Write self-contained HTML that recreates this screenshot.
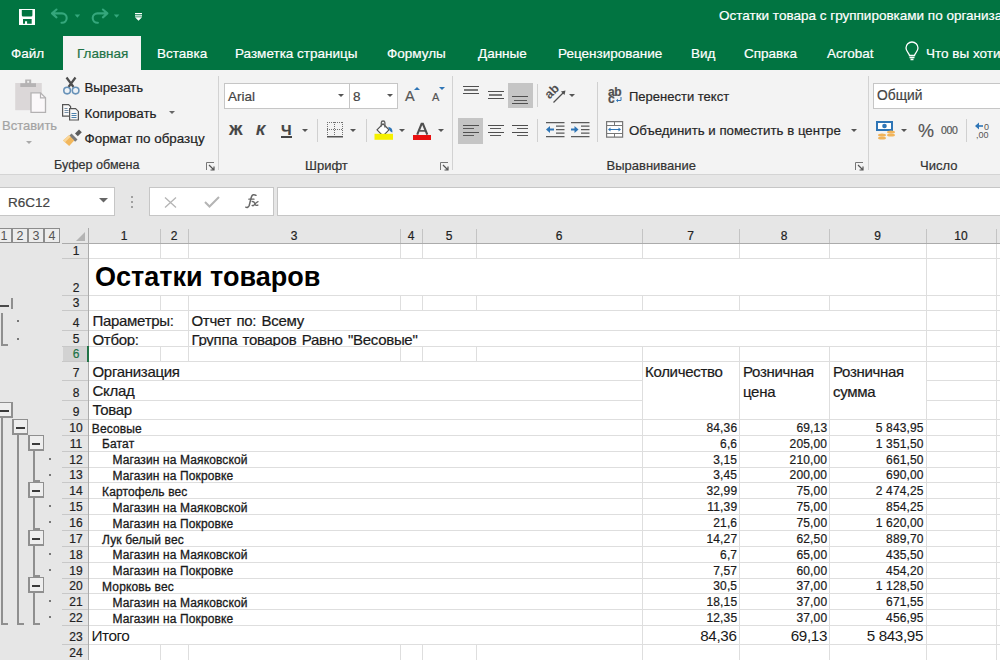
<!DOCTYPE html>
<html><head><meta charset="utf-8"><style>
html,body{margin:0;padding:0;}
body{width:1000px;height:660px;overflow:hidden;position:relative;background:#fff;font-family:"Liberation Sans",sans-serif;}
.a{position:absolute;}
.t{white-space:nowrap;}
.s{-webkit-text-stroke:0.2px currentColor;}
svg{overflow:visible;}
</style></head><body>
<div class="a" style="left:0px;top:0px;width:1000px;height:70px;background:#017441;"></div>
<svg class="a" style="left:19px;top:9px" width="16" height="16" viewBox="0 0 16 16"><path fill="#fff" d="M0 0h16v16H0z"/><path fill="#017441" d="M2.8 1h10.6v5.2a1.3 1.3 0 0 1-1.3 1.3H4.1a1.3 1.3 0 0 1-1.3-1.3zM4 10h8.7v4.8H8.1v-2.5H6v2.5H4z"/></svg>
<svg class="a" style="left:45px;top:3px" width="80" height="27" viewBox="0 0 80 27"><g fill="none" stroke="#35a77c" stroke-width="2.1" stroke-linecap="round" stroke-linejoin="round"><path d="M11.5 6.5L7 10.4l4.5 4M7 10.4h10a4.7 4.7 0 0 1 0 9.4h-.5"/><path d="M57.9 6.5l4.5 3.9-4.5 4M62.4 10.4h-10a4.7 4.7 0 0 0 0 9.4h.5"/></g><path fill="#35a77c" d="M29.6 11.6h5.6l-2.8 3.2zM68.8 11.6h5.6l-2.8 3.2z"/></svg>
<svg class="a" style="left:135px;top:13px" width="7" height="8" viewBox="0 0 7 8"><path fill="#fff" d="M0 0h7v1.3H0zM0 2.3h7v1.3H0zM0 4.3h7l-3.5 3.5z"/></svg>
<div class="a t s" style="left:719px;top:9.07px;font-size:13.5px;line-height:13.5px;color:#ffffff;">Остатки товара с группировками по организациям</div>
<div class="a" style="left:63px;top:36px;width:78px;height:34px;background:#f3f3f3;"></div>
<div class="a t s" style="left:11px;top:46.57px;font-size:13.5px;line-height:13.5px;color:#ffffff;">Файл</div>
<div class="a t s" style="left:77px;top:46.57px;font-size:13.5px;line-height:13.5px;color:#217346;">Главная</div>
<div class="a t s" style="left:157px;top:46.57px;font-size:13.5px;line-height:13.5px;color:#ffffff;">Вставка</div>
<div class="a t s" style="left:235px;top:46.57px;font-size:13.5px;line-height:13.5px;color:#ffffff;">Разметка страницы</div>
<div class="a t s" style="left:387px;top:46.57px;font-size:13.5px;line-height:13.5px;color:#ffffff;">Формулы</div>
<div class="a t s" style="left:478px;top:46.57px;font-size:13.5px;line-height:13.5px;color:#ffffff;">Данные</div>
<div class="a t s" style="left:558px;top:46.57px;font-size:13.5px;line-height:13.5px;color:#ffffff;">Рецензирование</div>
<div class="a t s" style="left:691px;top:46.57px;font-size:13.5px;line-height:13.5px;color:#ffffff;">Вид</div>
<div class="a t s" style="left:744px;top:46.57px;font-size:13.5px;line-height:13.5px;color:#ffffff;">Справка</div>
<div class="a t s" style="left:827px;top:46.57px;font-size:13.5px;line-height:13.5px;color:#ffffff;">Acrobat</div>
<div class="a t s" style="left:926px;top:46.57px;font-size:13.5px;line-height:13.5px;color:#ffffff;">Что вы хотите сделать?</div>
<svg class="a" style="left:905px;top:42px" width="14" height="20" viewBox="0 0 14 20"><path fill="none" stroke="#fff" stroke-width="1.3" d="M4.5 13.5c0-2-3.5-4-3.5-7.5a6 6 0 0 1 12 0c0 3.5-3.5 5.5-3.5 7.5z"/><path fill="none" stroke="#fff" stroke-width="1.3" d="M4.5 15.5h5M5.5 17.5h3"/></svg>
<div class="a" style="left:0px;top:70px;width:1000px;height:104px;background:#f3f3f3;"></div>
<div class="a" style="left:0px;top:174px;width:1000px;height:1px;background:#d4d4d4;"></div>
<div class="a" style="left:0px;top:175px;width:1000px;height:53px;background:#e6e6e6;"></div>
<div class="a" style="left:218px;top:76px;width:1px;height:94px;background:#d2d2d2;"></div>
<div class="a" style="left:452px;top:76px;width:1px;height:94px;background:#d2d2d2;"></div>
<div class="a" style="left:868px;top:76px;width:1px;height:94px;background:#d2d2d2;"></div>
<svg class="a" style="left:14px;top:79px" width="34" height="35" viewBox="0 0 34 35"><path fill="#dbd7d8" d="M1.2 4h26.6v27.2H1.2z"/><path fill="#b5b3b4" d="M6.3 4.3h15.7v3.6H6.3zM11.2 0.5h6v4h-6z"/><path fill="#f0f0f0" d="M13.2 1.8h2v2h-2z"/><path fill="#fbf8fa" stroke="#b3b1b2" stroke-width="1.3" d="M17 13.8h9.5l5 5v14.5H17z"/><path fill="none" stroke="#b3b1b2" stroke-width="1.2" d="M26.5 13.8v5h5"/></svg>
<div class="a t s" style="left:2px;top:119.00px;font-size:13px;line-height:13px;color:#a3a3a3;">Вставить</div>
<svg class="a" style="left:26px;top:141px" width="6" height="4" viewBox="0 0 6 4"><path fill="#a9a9a9" d="M0 0h6l-3 3z"/></svg>
<svg class="a" style="left:62px;top:76px" width="18" height="19" viewBox="0 0 18 19"><path fill="none" stroke="#4d4d4d" stroke-width="2.2" d="M4.5 1.5l7 9.5M13.5 1.5l-7 9.5"/><circle cx="5.1" cy="14.6" r="3.3" fill="#eef2f6" stroke="#6892b8" stroke-width="1.6"/><circle cx="13.6" cy="14.6" r="3.3" fill="#eef2f6" stroke="#6892b8" stroke-width="1.6"/></svg>
<div class="a t s" style="left:84.5px;top:80.83px;font-size:13.2px;line-height:13.2px;color:#222;">Вырезать</div>
<svg class="a" style="left:62px;top:104px" width="18" height="17" viewBox="0 0 18 17"><path fill="#f8f8f8" stroke="#555" stroke-width="1.2" d="M0.6 0.6h6l2 2v9.5H0.6z"/><path fill="none" stroke="#7891a8" stroke-width="1" d="M2.5 4.5h3M2.5 6.5h4M2.5 8.5h4"/><path fill="#f8f8f8" stroke="#555" stroke-width="1.2" d="M7.6 4.6h6l2.8 2.8v8.6H7.6z"/><path fill="none" stroke="#4d82ad" stroke-width="1" d="M9.5 9.5h5M9.5 11.5h5M9.5 13.5h5"/></svg>
<div class="a t s" style="left:84.5px;top:106.66px;font-size:13.4px;line-height:13.4px;color:#222;">Копировать</div>
<svg class="a" style="left:169px;top:111px" width="6" height="4" viewBox="0 0 6 4"><path fill="#666" d="M0 0h6l-3 3z"/></svg>
<svg class="a" style="left:62px;top:129px" width="20" height="17" viewBox="0 0 20 17"><path fill="#5a5a5a" d="M13 4.5l4-4 2.8 2.8-4 4z"/><path fill="#7a7a7a" d="M9.5 4.5l6 6-2.3 2.3-6-6z"/><path fill="#f2b75c" d="M1 11.5l6-5.2 5.2 5.2-5 5.5z"/><path fill="#f8d69a" d="M1 11.5l6-5.2 1.5 1.5-5.5 5.5z"/></svg>
<div class="a t s" style="left:84.5px;top:131.66px;font-size:13.4px;line-height:13.4px;color:#222;">Формат по образцу</div>
<div class="a t s" style="left:54px;top:159.33px;font-size:12.6px;line-height:12.6px;color:#333;">Буфер обмена</div>
<svg class="a" style="left:206px;top:162px" width="9" height="9" viewBox="0 0 9 9"><path fill="none" stroke="#777" stroke-width="1" d="M0.5 8V0.5H8"/><path fill="none" stroke="#555" stroke-width="1.2" d="M3 3l5 5M4.5 8H8V4.5"/></svg>
<div class="a" style="left:224px;top:83px;width:126px;height:26px;background:#c6c6c6;"></div>
<div class="a" style="left:225px;top:84px;width:124px;height:24px;background:#fff;"></div>
<div class="a" style="left:349px;top:83px;width:49px;height:26px;background:#c6c6c6;"></div>
<div class="a" style="left:350px;top:84px;width:47px;height:24px;background:#fff;"></div>
<div class="a t s" style="left:228px;top:89.57px;font-size:13.5px;line-height:13.5px;color:#444;">Arial</div>
<div class="a t s" style="left:353px;top:89.57px;font-size:13.5px;line-height:13.5px;color:#444;">8</div>
<svg class="a" style="left:338px;top:94px" width="6" height="4" viewBox="0 0 6 4"><path fill="#555" d="M0 0h6l-3 3z"/></svg>
<svg class="a" style="left:387px;top:94px" width="6" height="4" viewBox="0 0 6 4"><path fill="#555" d="M0 0h6l-3 3z"/></svg>
<div class="a t s" style="left:405px;top:89.33px;font-size:14.5px;line-height:14.5px;color:#555;">A</div>
<svg class="a" style="left:414px;top:87px" width="6" height="3" viewBox="0 0 6 3"><path fill="#2e75b6" d="M0 3h6l-3-3z"/></svg>
<div class="a t s" style="left:432px;top:92.29px;font-size:11px;line-height:11px;color:#555;">A</div>
<svg class="a" style="left:439px;top:87px" width="6" height="3" viewBox="0 0 6 3"><path fill="#2e75b6" d="M0 0h6l-3 3z"/></svg>
<div class="a t s" style="left:229px;top:122.30px;font-size:15px;line-height:15px;color:#444;font-weight:bold;">Ж</div>
<div class="a t s" style="left:256px;top:122.30px;font-size:15px;line-height:15px;color:#444;font-weight:bold;font-style:italic;">К</div>
<div class="a t s" style="left:281px;top:122.30px;font-size:15px;line-height:15px;color:#444;font-weight:bold;">Ч</div>
<div class="a" style="left:281px;top:136px;width:11px;height:1.5px;background:#444;"></div>
<svg class="a" style="left:302px;top:129px" width="6" height="4" viewBox="0 0 6 4"><path fill="#555" d="M0 0h6l-3 3z"/></svg>
<div class="a" style="left:317px;top:119px;width:1px;height:23px;background:#d0d0d0;"></div>
<svg class="a" style="left:327px;top:122px" width="16" height="16" viewBox="0 0 16 16"><g fill="#707070"><rect x="0" y="0" width="1" height="1"/><rect x="0" y="7" width="1" height="1"/><rect x="2" y="0" width="1" height="1"/><rect x="2" y="7" width="1" height="1"/><rect x="4" y="0" width="1" height="1"/><rect x="4" y="7" width="1" height="1"/><rect x="6" y="0" width="1" height="1"/><rect x="6" y="7" width="1" height="1"/><rect x="8" y="0" width="1" height="1"/><rect x="8" y="7" width="1" height="1"/><rect x="10" y="0" width="1" height="1"/><rect x="10" y="7" width="1" height="1"/><rect x="12" y="0" width="1" height="1"/><rect x="12" y="7" width="1" height="1"/><rect x="14" y="0" width="1" height="1"/><rect x="14" y="7" width="1" height="1"/><rect x="0" y="0" width="1" height="1"/><rect x="7" y="0" width="1" height="1"/><rect x="15" y="0" width="1" height="1"/><rect x="0" y="2" width="1" height="1"/><rect x="7" y="2" width="1" height="1"/><rect x="15" y="2" width="1" height="1"/><rect x="0" y="4" width="1" height="1"/><rect x="7" y="4" width="1" height="1"/><rect x="15" y="4" width="1" height="1"/><rect x="0" y="6" width="1" height="1"/><rect x="7" y="6" width="1" height="1"/><rect x="15" y="6" width="1" height="1"/><rect x="0" y="8" width="1" height="1"/><rect x="7" y="8" width="1" height="1"/><rect x="15" y="8" width="1" height="1"/><rect x="0" y="10" width="1" height="1"/><rect x="7" y="10" width="1" height="1"/><rect x="15" y="10" width="1" height="1"/><rect x="0" y="12" width="1" height="1"/><rect x="7" y="12" width="1" height="1"/><rect x="15" y="12" width="1" height="1"/></g><path fill="#555" d="M0 14h16v1.5H0z"/></svg>
<svg class="a" style="left:350px;top:129px" width="6" height="4" viewBox="0 0 6 4"><path fill="#555" d="M0 0h6l-3 3z"/></svg>
<div class="a" style="left:366px;top:119px;width:1px;height:23px;background:#d0d0d0;"></div>
<svg class="a" style="left:375px;top:120px" width="19" height="20" viewBox="0 0 19 20"><path fill="#fff" stroke="#505050" stroke-width="1.2" d="M2 9.8L8 3.8l6 6-6 6z"/><path fill="none" stroke="#606060" stroke-width="1.3" d="M6.3 6.5V2.8a1.8 1.8 0 0 1 3.6 0V7.5"/><path fill="#2e75b6" d="M13.2 6.8c3 .4 4.6 2.6 4.2 5.8-1.6-.5-3.2-2-4.2-5.8z"/><path fill="#f5f000" d="M-0.5 13.8h18.5v6H-0.5z"/></svg>
<svg class="a" style="left:399px;top:129px" width="6" height="4" viewBox="0 0 6 4"><path fill="#555" d="M0 0h6l-3 3z"/></svg>
<svg class="a" style="left:416px;top:123px" width="13" height="12" viewBox="0 0 13 12"><path fill="none" stroke="#4f4f4f" stroke-width="2.1" d="M1.2 11.6L5.6 0.9h1.3l4.4 10.7"/><path fill="none" stroke="#4f4f4f" stroke-width="1.6" d="M3.4 7.9h5.6"/></svg>
<div class="a" style="left:413px;top:135px;width:18px;height:4.5px;background:#e81010;"></div>
<svg class="a" style="left:438px;top:129px" width="6" height="4" viewBox="0 0 6 4"><path fill="#555" d="M0 0h6l-3 3z"/></svg>
<div class="a t s" style="left:305px;top:159.00px;font-size:13px;line-height:13px;color:#333;">Шрифт</div>
<svg class="a" style="left:440px;top:162px" width="9" height="9" viewBox="0 0 9 9"><path fill="none" stroke="#777" stroke-width="1" d="M0.5 8V0.5H8"/><path fill="none" stroke="#555" stroke-width="1.2" d="M3 3l5 5M4.5 8H8V4.5"/></svg>
<div class="a" style="left:508px;top:83px;width:25px;height:25px;background:#c5c5c5;"></div>
<div class="a" style="left:463px;top:86px;width:16px;height:1px;background:#4f4f4f;"></div>
<div class="a" style="left:464px;top:89px;width:14px;height:2px;background:#7a7a7a;"></div>
<div class="a" style="left:463px;top:93px;width:16px;height:1px;background:#4f4f4f;"></div>
<div class="a" style="left:488px;top:91px;width:16px;height:1px;background:#4f4f4f;"></div>
<div class="a" style="left:489px;top:94px;width:13px;height:1.5px;background:#7a7a7a;"></div>
<div class="a" style="left:488px;top:98px;width:16px;height:1px;background:#4f4f4f;"></div>
<div class="a" style="left:512px;top:96px;width:16px;height:1px;background:#4f4f4f;"></div>
<div class="a" style="left:514px;top:100px;width:13px;height:1px;background:#5a5a5a;"></div>
<div class="a" style="left:512px;top:103px;width:16px;height:1px;background:#4f4f4f;"></div>
<div class="a" style="left:537px;top:84px;width:1px;height:23px;background:#d0d0d0;"></div>
<svg class="a" style="left:545px;top:84px" width="22" height="20" viewBox="0 0 22 20"><text x="0" y="0" transform="translate(4.5 15.5) rotate(-45)" font-family="Liberation Sans" font-size="12.5" font-weight="bold" fill="#505050">ab</text><path fill="none" stroke="#505050" stroke-width="1.3" d="M8.5 18.5L18.5 8.5"/><path fill="#505050" d="M20.5 6.5l-4.6 1 3.6 3.6z"/></svg>
<svg class="a" style="left:569px;top:94px" width="6" height="4" viewBox="0 0 6 4"><path fill="#555" d="M0 0h6l-3 3z"/></svg>
<div class="a" style="left:458px;top:118px;width:25px;height:26px;background:#c5c5c5;"></div>
<div class="a" style="left:463px;top:125px;width:16px;height:1px;background:#4f4f4f;"></div>
<div class="a" style="left:463px;top:128px;width:11px;height:1px;background:#5a5a5a;"></div>
<div class="a" style="left:463px;top:131.5px;width:16px;height:1.5px;background:#4f4f4f;"></div>
<div class="a" style="left:463px;top:135px;width:11px;height:1px;background:#5a5a5a;"></div>
<div class="a" style="left:488px;top:125px;width:16px;height:1px;background:#4f4f4f;"></div>
<div class="a" style="left:490px;top:128px;width:11px;height:1px;background:#5a5a5a;"></div>
<div class="a" style="left:488px;top:131.5px;width:16px;height:1.5px;background:#4f4f4f;"></div>
<div class="a" style="left:490px;top:135px;width:11px;height:1px;background:#5a5a5a;"></div>
<div class="a" style="left:512px;top:125px;width:16px;height:1px;background:#4f4f4f;"></div>
<div class="a" style="left:517px;top:128px;width:11px;height:1px;background:#5a5a5a;"></div>
<div class="a" style="left:512px;top:131.5px;width:16px;height:1.5px;background:#4f4f4f;"></div>
<div class="a" style="left:517px;top:135px;width:11px;height:1px;background:#5a5a5a;"></div>
<div class="a" style="left:537px;top:119px;width:1px;height:23px;background:#d0d0d0;"></div>
<svg class="a" style="left:546px;top:122px" width="19" height="15" viewBox="0 0 19 15"><path fill="none" stroke="#5a5a5a" stroke-width="1.2" d="M0 0.6h18.5M10 4.1h8.5M10 7.6h8.5M10 11.1h8.5M0 14.6h18.5"/><path fill="none" stroke="#2e75b6" stroke-width="2" d="M3 7.5h5"/><path fill="#2e75b6" d="M0 7.5l4-3.6v7.2z"/></svg>
<svg class="a" style="left:571px;top:122px" width="19" height="15" viewBox="0 0 19 15"><path fill="none" stroke="#5a5a5a" stroke-width="1.2" d="M0 0.6h18.5M10 4.1h8.5M10 7.6h8.5M10 11.1h8.5M0 14.6h18.5"/><path fill="none" stroke="#2e75b6" stroke-width="2" d="M0 7.5h5"/><path fill="#2e75b6" d="M7.5 7.5l-4-3.6v7.2z"/></svg>
<div class="a" style="left:597px;top:82px;width:1px;height:60px;background:#d0d0d0;"></div>
<div class="a t s" style="left:608px;top:86.34px;font-size:12px;line-height:12px;color:#505050;font-weight:bold;letter-spacing:-0.5px;">ab</div>
<div class="a t s" style="left:608px;top:92.84px;font-size:12px;line-height:12px;color:#505050;font-weight:bold;">c</div>
<svg class="a" style="left:616px;top:97px" width="6" height="6" viewBox="0 0 6 6"><path fill="none" stroke="#2e75b6" stroke-width="1" d="M5 0v3.5H1.5"/><path fill="#2e75b6" d="M0 3.5l2-1.8v3.6z"/></svg>
<div class="a t s" style="left:629px;top:90.00px;font-size:13px;line-height:13px;color:#262626;">Перенести текст</div>
<svg class="a" style="left:606px;top:121px" width="18" height="17" viewBox="0 0 18 17"><path fill="#fff" stroke="#777" stroke-width="1.2" d="M0.6 0.6h16v15.5H0.6z"/><path fill="none" stroke="#777" stroke-width="1" d="M0.6 4.5h16M0.6 12.5h16M8.5 0.6v4M8.5 12.5v3.6"/><path fill="none" stroke="#2e75b6" stroke-width="1" d="M3 8.5h11"/><path fill="#2e75b6" d="M2 8.5l2.5-2v4zM15 8.5l-2.5-2v4z"/></svg>
<div class="a t s" style="left:629px;top:123.78px;font-size:13.25px;line-height:13.25px;color:#262626;">Объединить и поместить в центре</div>
<svg class="a" style="left:851px;top:129px" width="6" height="4" viewBox="0 0 6 4"><path fill="#555" d="M0 0h6l-3 3z"/></svg>
<div class="a t s" style="left:606.5px;top:159.00px;font-size:13px;line-height:13px;color:#333;">Выравнивание</div>
<svg class="a" style="left:855px;top:162px" width="9" height="9" viewBox="0 0 9 9"><path fill="none" stroke="#777" stroke-width="1" d="M0.5 8V0.5H8"/><path fill="none" stroke="#555" stroke-width="1.2" d="M3 3l5 5M4.5 8H8V4.5"/></svg>
<div class="a" style="left:873px;top:83px;width:130px;height:26px;background:#c6c6c6;"></div>
<div class="a" style="left:874px;top:84px;width:130px;height:24px;background:#fff;"></div>
<div class="a t s" style="left:877px;top:89.32px;font-size:13.8px;line-height:13.8px;color:#444;">Общий</div>
<svg class="a" style="left:876px;top:120px" width="20" height="19" viewBox="0 0 20 19"><path fill="#2e75b6" d="M0 1h17v10H0z"/><path fill="#fff" d="M2 3h13v6H2z"/><circle cx="8.5" cy="6" r="2.3" fill="#2e75b6"/><ellipse cx="15" cy="12" rx="4" ry="1.6" fill="#f1b45a"/><ellipse cx="15" cy="15" rx="4" ry="1.6" fill="#f1b45a"/><ellipse cx="6" cy="15" rx="4" ry="1.6" fill="#f1b45a"/><ellipse cx="6" cy="18" rx="4" ry="1.6" fill="#f1b45a"/></svg>
<svg class="a" style="left:901px;top:129px" width="6" height="4" viewBox="0 0 6 4"><path fill="#555" d="M0 0h6l-3 3z"/></svg>
<div class="a t s" style="left:918px;top:121.76px;font-size:18px;line-height:18px;color:#555;">%</div>
<div class="a t s" style="left:941px;top:125.11px;font-size:10.5px;line-height:10.5px;color:#555;letter-spacing:-0.3px;">000</div>
<div class="a" style="left:966px;top:119px;width:1px;height:23px;background:#d0d0d0;"></div>
<svg class="a" style="left:975px;top:122px" width="17" height="17" viewBox="0 0 17 17"><path fill="#2e75b6" d="M0 4l4-3.5v7z"/><path fill="none" stroke="#2e75b6" stroke-width="1.6" d="M3 4h5"/><text x="9" y="8" font-family="Liberation Sans" font-size="9" fill="#555">0</text><text x="1" y="16" font-family="Liberation Sans" font-size="9" fill="#555">,00</text></svg>
<div class="a t s" style="left:920px;top:159.00px;font-size:13px;line-height:13px;color:#333;">Число</div>
<div class="a" style="left:0px;top:187px;width:115px;height:29px;background:#c6c6c6;"></div>
<div class="a" style="left:-1px;top:188px;width:115px;height:27px;background:#fff;"></div>
<div class="a t s" style="left:8px;top:195.57px;font-size:13.5px;line-height:13.5px;color:#444;">R6C12</div>
<svg class="a" style="left:99px;top:198px" width="9" height="5" viewBox="0 0 9 5"><path fill="#666" d="M0 0h9l-4.5 4.5z"/></svg>
<div class="a" style="left:131px;top:196px;width:2px;height:2px;background:#a0a0a0;"></div>
<div class="a" style="left:131px;top:201px;width:2px;height:2px;background:#a0a0a0;"></div>
<div class="a" style="left:131px;top:206px;width:2px;height:2px;background:#a0a0a0;"></div>
<div class="a" style="left:149px;top:187px;width:125px;height:29px;background:#c6c6c6;"></div>
<div class="a" style="left:150px;top:188px;width:123px;height:27px;background:#fff;"></div>
<svg class="a" style="left:164px;top:197px" width="13" height="11" viewBox="0 0 13 11"><path fill="none" stroke="#b4b4b4" stroke-width="1.3" d="M1 0.5l11 10M12 0.5L1 10.5"/></svg>
<svg class="a" style="left:204px;top:196px" width="16" height="12" viewBox="0 0 16 12"><path fill="none" stroke="#b4b4b4" stroke-width="2" d="M1 6l4.5 4.5L15 1"/></svg>
<svg class="a" style="left:245px;top:194px" width="15" height="15" viewBox="0 0 15 15"><g fill="none" stroke="#686868" stroke-linecap="round"><path stroke-width="1.5" d="M11 1.3C9 0 7 0.6 6.3 3.2L4.2 11.5C3.6 13.3 2 13.8 0.8 13.2"/><path stroke-width="1.3" d="M3.8 5.2h5.2"/><path stroke-width="1.4" d="M7.2 7.6c1.6-.6 2.3.8 3 2.6.5 1.2 1.3 1.5 2.6.9M13 7.6c-1 .3-3.5 2.8-4.2 3.6-.6.6-1.2.5-1.6.2"/></g></svg>
<div class="a" style="left:277px;top:187px;width:730px;height:29px;background:#c6c6c6;"></div>
<div class="a" style="left:278px;top:188px;width:730px;height:27px;background:#fff;"></div>
<div class="a" style="left:0px;top:228px;width:1000px;height:432px;background:#e6e6e6;"></div>
<div class="a" style="left:88px;top:244px;width:912px;height:416px;background:#ffffff;"></div>
<div class="a" style="left:160px;top:244px;width:1px;height:15px;background:#dedede;"></div>
<div class="a" style="left:188px;top:244px;width:1px;height:15px;background:#dedede;"></div>
<div class="a" style="left:400px;top:244px;width:1px;height:15px;background:#dedede;"></div>
<div class="a" style="left:422px;top:244px;width:1px;height:15px;background:#dedede;"></div>
<div class="a" style="left:476px;top:244px;width:1px;height:15px;background:#dedede;"></div>
<div class="a" style="left:642px;top:244px;width:1px;height:15px;background:#dedede;"></div>
<div class="a" style="left:739px;top:244px;width:1px;height:15px;background:#dedede;"></div>
<div class="a" style="left:829px;top:244px;width:1px;height:15px;background:#dedede;"></div>
<div class="a" style="left:926px;top:244px;width:1px;height:15px;background:#dedede;"></div>
<div class="a" style="left:996px;top:244px;width:1px;height:15px;background:#dedede;"></div>
<div class="a" style="left:926px;top:259px;width:1px;height:37px;background:#dedede;"></div>
<div class="a" style="left:996px;top:259px;width:1px;height:37px;background:#dedede;"></div>
<div class="a" style="left:160px;top:296px;width:1px;height:15px;background:#dedede;"></div>
<div class="a" style="left:188px;top:296px;width:1px;height:15px;background:#dedede;"></div>
<div class="a" style="left:400px;top:296px;width:1px;height:15px;background:#dedede;"></div>
<div class="a" style="left:422px;top:296px;width:1px;height:15px;background:#dedede;"></div>
<div class="a" style="left:476px;top:296px;width:1px;height:15px;background:#dedede;"></div>
<div class="a" style="left:642px;top:296px;width:1px;height:15px;background:#dedede;"></div>
<div class="a" style="left:739px;top:296px;width:1px;height:15px;background:#dedede;"></div>
<div class="a" style="left:829px;top:296px;width:1px;height:15px;background:#dedede;"></div>
<div class="a" style="left:926px;top:296px;width:1px;height:15px;background:#dedede;"></div>
<div class="a" style="left:996px;top:296px;width:1px;height:15px;background:#dedede;"></div>
<div class="a" style="left:188px;top:311px;width:1px;height:20px;background:#dedede;"></div>
<div class="a" style="left:926px;top:311px;width:1px;height:20px;background:#dedede;"></div>
<div class="a" style="left:996px;top:311px;width:1px;height:20px;background:#dedede;"></div>
<div class="a" style="left:188px;top:331px;width:1px;height:16px;background:#dedede;"></div>
<div class="a" style="left:926px;top:331px;width:1px;height:16px;background:#dedede;"></div>
<div class="a" style="left:996px;top:331px;width:1px;height:16px;background:#dedede;"></div>
<div class="a" style="left:160px;top:347px;width:1px;height:15px;background:#dedede;"></div>
<div class="a" style="left:188px;top:347px;width:1px;height:15px;background:#dedede;"></div>
<div class="a" style="left:400px;top:347px;width:1px;height:15px;background:#dedede;"></div>
<div class="a" style="left:422px;top:347px;width:1px;height:15px;background:#dedede;"></div>
<div class="a" style="left:476px;top:347px;width:1px;height:15px;background:#dedede;"></div>
<div class="a" style="left:642px;top:347px;width:1px;height:15px;background:#dedede;"></div>
<div class="a" style="left:739px;top:347px;width:1px;height:15px;background:#dedede;"></div>
<div class="a" style="left:829px;top:347px;width:1px;height:15px;background:#dedede;"></div>
<div class="a" style="left:926px;top:347px;width:1px;height:15px;background:#dedede;"></div>
<div class="a" style="left:996px;top:347px;width:1px;height:15px;background:#dedede;"></div>
<div class="a" style="left:642px;top:362px;width:1px;height:19px;background:#dedede;"></div>
<div class="a" style="left:739px;top:362px;width:1px;height:19px;background:#dedede;"></div>
<div class="a" style="left:829px;top:362px;width:1px;height:19px;background:#dedede;"></div>
<div class="a" style="left:926px;top:362px;width:1px;height:19px;background:#dedede;"></div>
<div class="a" style="left:996px;top:362px;width:1px;height:19px;background:#dedede;"></div>
<div class="a" style="left:642px;top:381px;width:1px;height:20px;background:#dedede;"></div>
<div class="a" style="left:739px;top:381px;width:1px;height:20px;background:#dedede;"></div>
<div class="a" style="left:829px;top:381px;width:1px;height:20px;background:#dedede;"></div>
<div class="a" style="left:926px;top:381px;width:1px;height:20px;background:#dedede;"></div>
<div class="a" style="left:996px;top:381px;width:1px;height:20px;background:#dedede;"></div>
<div class="a" style="left:642px;top:401px;width:1px;height:19px;background:#dedede;"></div>
<div class="a" style="left:739px;top:401px;width:1px;height:19px;background:#dedede;"></div>
<div class="a" style="left:829px;top:401px;width:1px;height:19px;background:#dedede;"></div>
<div class="a" style="left:926px;top:401px;width:1px;height:19px;background:#dedede;"></div>
<div class="a" style="left:996px;top:401px;width:1px;height:19px;background:#dedede;"></div>
<div class="a" style="left:642px;top:420px;width:1px;height:16px;background:#dedede;"></div>
<div class="a" style="left:739px;top:420px;width:1px;height:16px;background:#dedede;"></div>
<div class="a" style="left:829px;top:420px;width:1px;height:16px;background:#dedede;"></div>
<div class="a" style="left:926px;top:420px;width:1px;height:16px;background:#dedede;"></div>
<div class="a" style="left:996px;top:420px;width:1px;height:16px;background:#dedede;"></div>
<div class="a" style="left:642px;top:436px;width:1px;height:16px;background:#dedede;"></div>
<div class="a" style="left:739px;top:436px;width:1px;height:16px;background:#dedede;"></div>
<div class="a" style="left:829px;top:436px;width:1px;height:16px;background:#dedede;"></div>
<div class="a" style="left:926px;top:436px;width:1px;height:16px;background:#dedede;"></div>
<div class="a" style="left:996px;top:436px;width:1px;height:16px;background:#dedede;"></div>
<div class="a" style="left:642px;top:452px;width:1px;height:16px;background:#dedede;"></div>
<div class="a" style="left:739px;top:452px;width:1px;height:16px;background:#dedede;"></div>
<div class="a" style="left:829px;top:452px;width:1px;height:16px;background:#dedede;"></div>
<div class="a" style="left:926px;top:452px;width:1px;height:16px;background:#dedede;"></div>
<div class="a" style="left:996px;top:452px;width:1px;height:16px;background:#dedede;"></div>
<div class="a" style="left:642px;top:468px;width:1px;height:15px;background:#dedede;"></div>
<div class="a" style="left:739px;top:468px;width:1px;height:15px;background:#dedede;"></div>
<div class="a" style="left:829px;top:468px;width:1px;height:15px;background:#dedede;"></div>
<div class="a" style="left:926px;top:468px;width:1px;height:15px;background:#dedede;"></div>
<div class="a" style="left:996px;top:468px;width:1px;height:15px;background:#dedede;"></div>
<div class="a" style="left:642px;top:483px;width:1px;height:16px;background:#dedede;"></div>
<div class="a" style="left:739px;top:483px;width:1px;height:16px;background:#dedede;"></div>
<div class="a" style="left:829px;top:483px;width:1px;height:16px;background:#dedede;"></div>
<div class="a" style="left:926px;top:483px;width:1px;height:16px;background:#dedede;"></div>
<div class="a" style="left:996px;top:483px;width:1px;height:16px;background:#dedede;"></div>
<div class="a" style="left:642px;top:499px;width:1px;height:16px;background:#dedede;"></div>
<div class="a" style="left:739px;top:499px;width:1px;height:16px;background:#dedede;"></div>
<div class="a" style="left:829px;top:499px;width:1px;height:16px;background:#dedede;"></div>
<div class="a" style="left:926px;top:499px;width:1px;height:16px;background:#dedede;"></div>
<div class="a" style="left:996px;top:499px;width:1px;height:16px;background:#dedede;"></div>
<div class="a" style="left:642px;top:515px;width:1px;height:16px;background:#dedede;"></div>
<div class="a" style="left:739px;top:515px;width:1px;height:16px;background:#dedede;"></div>
<div class="a" style="left:829px;top:515px;width:1px;height:16px;background:#dedede;"></div>
<div class="a" style="left:926px;top:515px;width:1px;height:16px;background:#dedede;"></div>
<div class="a" style="left:996px;top:515px;width:1px;height:16px;background:#dedede;"></div>
<div class="a" style="left:642px;top:531px;width:1px;height:16px;background:#dedede;"></div>
<div class="a" style="left:739px;top:531px;width:1px;height:16px;background:#dedede;"></div>
<div class="a" style="left:829px;top:531px;width:1px;height:16px;background:#dedede;"></div>
<div class="a" style="left:926px;top:531px;width:1px;height:16px;background:#dedede;"></div>
<div class="a" style="left:996px;top:531px;width:1px;height:16px;background:#dedede;"></div>
<div class="a" style="left:642px;top:547px;width:1px;height:16px;background:#dedede;"></div>
<div class="a" style="left:739px;top:547px;width:1px;height:16px;background:#dedede;"></div>
<div class="a" style="left:829px;top:547px;width:1px;height:16px;background:#dedede;"></div>
<div class="a" style="left:926px;top:547px;width:1px;height:16px;background:#dedede;"></div>
<div class="a" style="left:996px;top:547px;width:1px;height:16px;background:#dedede;"></div>
<div class="a" style="left:642px;top:563px;width:1px;height:16px;background:#dedede;"></div>
<div class="a" style="left:739px;top:563px;width:1px;height:16px;background:#dedede;"></div>
<div class="a" style="left:829px;top:563px;width:1px;height:16px;background:#dedede;"></div>
<div class="a" style="left:926px;top:563px;width:1px;height:16px;background:#dedede;"></div>
<div class="a" style="left:996px;top:563px;width:1px;height:16px;background:#dedede;"></div>
<div class="a" style="left:642px;top:579px;width:1px;height:15px;background:#dedede;"></div>
<div class="a" style="left:739px;top:579px;width:1px;height:15px;background:#dedede;"></div>
<div class="a" style="left:829px;top:579px;width:1px;height:15px;background:#dedede;"></div>
<div class="a" style="left:926px;top:579px;width:1px;height:15px;background:#dedede;"></div>
<div class="a" style="left:996px;top:579px;width:1px;height:15px;background:#dedede;"></div>
<div class="a" style="left:642px;top:594px;width:1px;height:16px;background:#dedede;"></div>
<div class="a" style="left:739px;top:594px;width:1px;height:16px;background:#dedede;"></div>
<div class="a" style="left:829px;top:594px;width:1px;height:16px;background:#dedede;"></div>
<div class="a" style="left:926px;top:594px;width:1px;height:16px;background:#dedede;"></div>
<div class="a" style="left:996px;top:594px;width:1px;height:16px;background:#dedede;"></div>
<div class="a" style="left:642px;top:610px;width:1px;height:16px;background:#dedede;"></div>
<div class="a" style="left:739px;top:610px;width:1px;height:16px;background:#dedede;"></div>
<div class="a" style="left:829px;top:610px;width:1px;height:16px;background:#dedede;"></div>
<div class="a" style="left:926px;top:610px;width:1px;height:16px;background:#dedede;"></div>
<div class="a" style="left:996px;top:610px;width:1px;height:16px;background:#dedede;"></div>
<div class="a" style="left:642px;top:626px;width:1px;height:19px;background:#dedede;"></div>
<div class="a" style="left:739px;top:626px;width:1px;height:19px;background:#dedede;"></div>
<div class="a" style="left:829px;top:626px;width:1px;height:19px;background:#dedede;"></div>
<div class="a" style="left:926px;top:626px;width:1px;height:19px;background:#dedede;"></div>
<div class="a" style="left:996px;top:626px;width:1px;height:19px;background:#dedede;"></div>
<div class="a" style="left:160px;top:645px;width:1px;height:36px;background:#dedede;"></div>
<div class="a" style="left:188px;top:645px;width:1px;height:36px;background:#dedede;"></div>
<div class="a" style="left:400px;top:645px;width:1px;height:36px;background:#dedede;"></div>
<div class="a" style="left:422px;top:645px;width:1px;height:36px;background:#dedede;"></div>
<div class="a" style="left:476px;top:645px;width:1px;height:36px;background:#dedede;"></div>
<div class="a" style="left:642px;top:645px;width:1px;height:36px;background:#dedede;"></div>
<div class="a" style="left:739px;top:645px;width:1px;height:36px;background:#dedede;"></div>
<div class="a" style="left:829px;top:645px;width:1px;height:36px;background:#dedede;"></div>
<div class="a" style="left:926px;top:645px;width:1px;height:36px;background:#dedede;"></div>
<div class="a" style="left:996px;top:645px;width:1px;height:36px;background:#dedede;"></div>
<div class="a" style="left:89px;top:258px;width:911px;height:1px;background:#dedede;"></div>
<div class="a" style="left:89px;top:295px;width:911px;height:1px;background:#dedede;"></div>
<div class="a" style="left:89px;top:310px;width:911px;height:1px;background:#dedede;"></div>
<div class="a" style="left:89px;top:330px;width:911px;height:1px;background:#dedede;"></div>
<div class="a" style="left:89px;top:346px;width:911px;height:1px;background:#dedede;"></div>
<div class="a" style="left:89px;top:361px;width:911px;height:1px;background:#dedede;"></div>
<div class="a" style="left:89px;top:380px;width:553px;height:1px;background:#dedede;"></div>
<div class="a" style="left:926px;top:380px;width:74px;height:1px;background:#dedede;"></div>
<div class="a" style="left:89px;top:400px;width:553px;height:1px;background:#dedede;"></div>
<div class="a" style="left:926px;top:400px;width:74px;height:1px;background:#dedede;"></div>
<div class="a" style="left:89px;top:419px;width:911px;height:1px;background:#dedede;"></div>
<div class="a" style="left:89px;top:435px;width:911px;height:1px;background:#dedede;"></div>
<div class="a" style="left:89px;top:451px;width:911px;height:1px;background:#dedede;"></div>
<div class="a" style="left:89px;top:467px;width:911px;height:1px;background:#dedede;"></div>
<div class="a" style="left:89px;top:482px;width:911px;height:1px;background:#dedede;"></div>
<div class="a" style="left:89px;top:498px;width:911px;height:1px;background:#dedede;"></div>
<div class="a" style="left:89px;top:514px;width:911px;height:1px;background:#dedede;"></div>
<div class="a" style="left:89px;top:530px;width:911px;height:1px;background:#dedede;"></div>
<div class="a" style="left:89px;top:546px;width:911px;height:1px;background:#dedede;"></div>
<div class="a" style="left:89px;top:562px;width:911px;height:1px;background:#dedede;"></div>
<div class="a" style="left:89px;top:578px;width:911px;height:1px;background:#dedede;"></div>
<div class="a" style="left:89px;top:593px;width:911px;height:1px;background:#dedede;"></div>
<div class="a" style="left:89px;top:609px;width:911px;height:1px;background:#dedede;"></div>
<div class="a" style="left:89px;top:625px;width:911px;height:1px;background:#dedede;"></div>
<div class="a" style="left:89px;top:644px;width:911px;height:1px;background:#dedede;"></div>
<div class="a" style="left:160px;top:229px;width:1px;height:14px;background:#c4c4c4;"></div>
<div class="a" style="left:188px;top:229px;width:1px;height:14px;background:#c4c4c4;"></div>
<div class="a" style="left:400px;top:229px;width:1px;height:14px;background:#c4c4c4;"></div>
<div class="a" style="left:422px;top:229px;width:1px;height:14px;background:#c4c4c4;"></div>
<div class="a" style="left:476px;top:229px;width:1px;height:14px;background:#c4c4c4;"></div>
<div class="a" style="left:642px;top:229px;width:1px;height:14px;background:#c4c4c4;"></div>
<div class="a" style="left:739px;top:229px;width:1px;height:14px;background:#c4c4c4;"></div>
<div class="a" style="left:829px;top:229px;width:1px;height:14px;background:#c4c4c4;"></div>
<div class="a" style="left:926px;top:229px;width:1px;height:14px;background:#c4c4c4;"></div>
<div class="a" style="left:996px;top:229px;width:1px;height:14px;background:#c4c4c4;"></div>
<div class="a" style="left:62px;top:243px;width:938px;height:1px;background:#ababab;"></div>
<div class="a" style="left:88px;top:228px;width:1px;height:432px;background:#ababab;"></div>
<div class="a" style="left:62px;top:258px;width:26px;height:1px;background:#c8c8c8;"></div>
<div class="a" style="left:62px;top:295px;width:26px;height:1px;background:#c8c8c8;"></div>
<div class="a" style="left:62px;top:310px;width:26px;height:1px;background:#c8c8c8;"></div>
<div class="a" style="left:62px;top:330px;width:26px;height:1px;background:#c8c8c8;"></div>
<div class="a" style="left:62px;top:346px;width:26px;height:1px;background:#c8c8c8;"></div>
<div class="a" style="left:62px;top:361px;width:26px;height:1px;background:#c8c8c8;"></div>
<div class="a" style="left:62px;top:380px;width:26px;height:1px;background:#c8c8c8;"></div>
<div class="a" style="left:62px;top:400px;width:26px;height:1px;background:#c8c8c8;"></div>
<div class="a" style="left:62px;top:419px;width:26px;height:1px;background:#c8c8c8;"></div>
<div class="a" style="left:62px;top:435px;width:26px;height:1px;background:#c8c8c8;"></div>
<div class="a" style="left:62px;top:451px;width:26px;height:1px;background:#c8c8c8;"></div>
<div class="a" style="left:62px;top:467px;width:26px;height:1px;background:#c8c8c8;"></div>
<div class="a" style="left:62px;top:482px;width:26px;height:1px;background:#c8c8c8;"></div>
<div class="a" style="left:62px;top:498px;width:26px;height:1px;background:#c8c8c8;"></div>
<div class="a" style="left:62px;top:514px;width:26px;height:1px;background:#c8c8c8;"></div>
<div class="a" style="left:62px;top:530px;width:26px;height:1px;background:#c8c8c8;"></div>
<div class="a" style="left:62px;top:546px;width:26px;height:1px;background:#c8c8c8;"></div>
<div class="a" style="left:62px;top:562px;width:26px;height:1px;background:#c8c8c8;"></div>
<div class="a" style="left:62px;top:578px;width:26px;height:1px;background:#c8c8c8;"></div>
<div class="a" style="left:62px;top:593px;width:26px;height:1px;background:#c8c8c8;"></div>
<div class="a" style="left:62px;top:609px;width:26px;height:1px;background:#c8c8c8;"></div>
<div class="a" style="left:62px;top:625px;width:26px;height:1px;background:#c8c8c8;"></div>
<div class="a" style="left:62px;top:644px;width:26px;height:1px;background:#c8c8c8;"></div>
<div class="a" style="left:63px;top:347px;width:25px;height:14px;background:#d2d2d2;"></div>
<div class="a" style="left:87px;top:346px;width:2px;height:16px;background:#217346;"></div>
<div class="a t s" style="left:104.0px;width:40px;text-align:center;top:229.84px;font-size:12px;line-height:12px;color:#222;">1</div>
<div class="a t s" style="left:154.0px;width:40px;text-align:center;top:229.84px;font-size:12px;line-height:12px;color:#222;">2</div>
<div class="a t s" style="left:274.0px;width:40px;text-align:center;top:229.84px;font-size:12px;line-height:12px;color:#222;">3</div>
<div class="a t s" style="left:391.0px;width:40px;text-align:center;top:229.84px;font-size:12px;line-height:12px;color:#222;">4</div>
<div class="a t s" style="left:429.0px;width:40px;text-align:center;top:229.84px;font-size:12px;line-height:12px;color:#222;">5</div>
<div class="a t s" style="left:539.0px;width:40px;text-align:center;top:229.84px;font-size:12px;line-height:12px;color:#222;">6</div>
<div class="a t s" style="left:670.5px;width:40px;text-align:center;top:229.84px;font-size:12px;line-height:12px;color:#222;">7</div>
<div class="a t s" style="left:764.0px;width:40px;text-align:center;top:229.84px;font-size:12px;line-height:12px;color:#222;">8</div>
<div class="a t s" style="left:857.5px;width:40px;text-align:center;top:229.84px;font-size:12px;line-height:12px;color:#222;">9</div>
<div class="a t s" style="left:941.0px;width:40px;text-align:center;top:229.84px;font-size:12px;line-height:12px;color:#222;">10</div>
<div class="a t s" style="left:63.0px;width:26px;text-align:center;top:244.84px;font-size:12px;line-height:12px;color:#222;">1</div>
<div class="a t s" style="left:63.0px;width:26px;text-align:center;top:281.84px;font-size:12px;line-height:12px;color:#222;">2</div>
<div class="a t s" style="left:63.0px;width:26px;text-align:center;top:296.84px;font-size:12px;line-height:12px;color:#222;">3</div>
<div class="a t s" style="left:63.0px;width:26px;text-align:center;top:316.84px;font-size:12px;line-height:12px;color:#222;">4</div>
<div class="a t s" style="left:63.0px;width:26px;text-align:center;top:332.84px;font-size:12px;line-height:12px;color:#222;">5</div>
<div class="a t s" style="left:63.0px;width:26px;text-align:center;top:347.84px;font-size:12px;line-height:12px;color:#217346;">6</div>
<div class="a t s" style="left:63.0px;width:26px;text-align:center;top:366.84px;font-size:12px;line-height:12px;color:#222;">7</div>
<div class="a t s" style="left:63.0px;width:26px;text-align:center;top:386.84px;font-size:12px;line-height:12px;color:#222;">8</div>
<div class="a t s" style="left:63.0px;width:26px;text-align:center;top:405.84px;font-size:12px;line-height:12px;color:#222;">9</div>
<div class="a t s" style="left:63.0px;width:26px;text-align:center;top:421.84px;font-size:12px;line-height:12px;color:#222;">10</div>
<div class="a t s" style="left:63.0px;width:26px;text-align:center;top:437.84px;font-size:12px;line-height:12px;color:#222;">11</div>
<div class="a t s" style="left:63.0px;width:26px;text-align:center;top:453.84px;font-size:12px;line-height:12px;color:#222;">12</div>
<div class="a t s" style="left:63.0px;width:26px;text-align:center;top:468.84px;font-size:12px;line-height:12px;color:#222;">13</div>
<div class="a t s" style="left:63.0px;width:26px;text-align:center;top:484.84px;font-size:12px;line-height:12px;color:#222;">14</div>
<div class="a t s" style="left:63.0px;width:26px;text-align:center;top:500.84px;font-size:12px;line-height:12px;color:#222;">15</div>
<div class="a t s" style="left:63.0px;width:26px;text-align:center;top:516.84px;font-size:12px;line-height:12px;color:#222;">16</div>
<div class="a t s" style="left:63.0px;width:26px;text-align:center;top:532.84px;font-size:12px;line-height:12px;color:#222;">17</div>
<div class="a t s" style="left:63.0px;width:26px;text-align:center;top:548.84px;font-size:12px;line-height:12px;color:#222;">18</div>
<div class="a t s" style="left:63.0px;width:26px;text-align:center;top:564.84px;font-size:12px;line-height:12px;color:#222;">19</div>
<div class="a t s" style="left:63.0px;width:26px;text-align:center;top:579.84px;font-size:12px;line-height:12px;color:#222;">20</div>
<div class="a t s" style="left:63.0px;width:26px;text-align:center;top:595.84px;font-size:12px;line-height:12px;color:#222;">21</div>
<div class="a t s" style="left:63.0px;width:26px;text-align:center;top:611.84px;font-size:12px;line-height:12px;color:#222;">22</div>
<div class="a t s" style="left:63.0px;width:26px;text-align:center;top:630.84px;font-size:12px;line-height:12px;color:#222;">23</div>
<div class="a t s" style="left:63.0px;width:26px;text-align:center;top:646.84px;font-size:12px;line-height:12px;color:#222;">24</div>
<svg class="a" style="left:76px;top:232px" width="9" height="9" viewBox="0 0 9 9"><path fill="#b4b4b4" d="M9 0v9H0z"/></svg>
<div class="a" style="left:-4px;top:227.5px;width:16px;height:15.5px;background:#8c8c8c;"></div>
<div class="a" style="left:-2.8px;top:228.7px;width:13.6px;height:13.1px;background:#ececec;"></div>
<div class="a t" style="left:-4.0px;width:16px;text-align:center;top:230.42px;font-size:12.5px;line-height:12.5px;color:#555;">1</div>
<div class="a" style="left:12px;top:227.5px;width:16px;height:15.5px;background:#8c8c8c;"></div>
<div class="a" style="left:13.2px;top:228.7px;width:13.6px;height:13.1px;background:#ececec;"></div>
<div class="a t" style="left:12.0px;width:16px;text-align:center;top:230.42px;font-size:12.5px;line-height:12.5px;color:#555;">2</div>
<div class="a" style="left:28px;top:227.5px;width:16px;height:15.5px;background:#8c8c8c;"></div>
<div class="a" style="left:29.2px;top:228.7px;width:13.6px;height:13.1px;background:#ececec;"></div>
<div class="a t" style="left:28.0px;width:16px;text-align:center;top:230.42px;font-size:12.5px;line-height:12.5px;color:#555;">3</div>
<div class="a" style="left:44px;top:227.5px;width:16px;height:15.5px;background:#8c8c8c;"></div>
<div class="a" style="left:45.2px;top:228.7px;width:13.6px;height:13.1px;background:#ececec;"></div>
<div class="a t" style="left:44.0px;width:16px;text-align:center;top:230.42px;font-size:12.5px;line-height:12.5px;color:#555;">4</div>
<div class="a t" style="left:95px;top:264.14px;font-size:27px;line-height:27px;color:#000;font-weight:bold;">Остатки товаров</div>
<div class="a t s" style="left:92.5px;top:313.30px;font-size:15px;line-height:15px;color:#1a1a1a;letter-spacing:-0.3px;word-spacing:1.5px;">Параметры:</div>
<div class="a t s" style="left:191.5px;top:313.30px;font-size:15px;line-height:15px;color:#1a1a1a;letter-spacing:-0.3px;word-spacing:1.5px;">Отчет по: Всему</div>
<div class="a" style="left:89px;top:331px;width:837px;height:15px;overflow:hidden">
<div class="a t s" style="left:3.5px;top:0.80px;font-size:15px;line-height:15px;color:#1a1a1a;letter-spacing:-0.3px;word-spacing:1.5px;">Отбор:</div>
<div class="a t s" style="left:102.5px;top:0.80px;font-size:15px;line-height:15px;color:#1a1a1a;letter-spacing:-0.3px;word-spacing:1.5px;">Группа товаров Равно "Весовые"</div>
</div>
<div class="a t s" style="left:92.5px;top:364.30px;font-size:15px;line-height:15px;color:#1a1a1a;letter-spacing:-0.3px;word-spacing:1.5px;">Организация</div>
<div class="a t s" style="left:92.5px;top:383.30px;font-size:15px;line-height:15px;color:#1a1a1a;letter-spacing:-0.3px;word-spacing:1.5px;">Склад</div>
<div class="a t s" style="left:92.5px;top:402.30px;font-size:15px;line-height:15px;color:#1a1a1a;letter-spacing:-0.3px;word-spacing:1.5px;">Товар</div>
<div class="a t s" style="left:645px;top:364.30px;font-size:15px;line-height:15px;color:#1a1a1a;letter-spacing:-0.3px;word-spacing:1.5px;">Количество</div>
<div class="a t s" style="left:743px;top:364.30px;font-size:15px;line-height:15px;color:#1a1a1a;letter-spacing:-0.3px;word-spacing:1.5px;">Розничная</div>
<div class="a t s" style="left:743px;top:384.30px;font-size:15px;line-height:15px;color:#1a1a1a;letter-spacing:-0.3px;word-spacing:1.5px;">цена</div>
<div class="a t s" style="left:833px;top:364.30px;font-size:15px;line-height:15px;color:#1a1a1a;letter-spacing:-0.3px;word-spacing:1.5px;">Розничная</div>
<div class="a t s" style="left:833px;top:384.30px;font-size:15px;line-height:15px;color:#1a1a1a;letter-spacing:-0.3px;word-spacing:1.5px;">сумма</div>
<div class="a t s" style="left:91.8px;top:422.54px;font-size:12px;line-height:12px;color:#1a1a1a;letter-spacing:0.12px;-webkit-text-stroke:0.3px #1a1a1a;">Весовые</div>
<div class="a t s" style="right:262.79999999999995px;top:422.04px;font-size:12px;line-height:12px;color:#1a1a1a;letter-spacing:0.15px;">84,36</div>
<div class="a t s" style="right:172.79999999999995px;top:422.04px;font-size:12px;line-height:12px;color:#1a1a1a;letter-spacing:0.15px;">69,13</div>
<div class="a t s" style="right:76.29999999999995px;top:422.04px;font-size:12px;line-height:12px;color:#1a1a1a;letter-spacing:0.15px;">5 843,95</div>
<div class="a t s" style="left:102.1px;top:438.34px;font-size:12px;line-height:12px;color:#1a1a1a;letter-spacing:0.12px;-webkit-text-stroke:0.3px #1a1a1a;">Батат</div>
<div class="a t s" style="right:262.79999999999995px;top:437.84px;font-size:12px;line-height:12px;color:#1a1a1a;letter-spacing:0.15px;">6,6</div>
<div class="a t s" style="right:172.79999999999995px;top:437.84px;font-size:12px;line-height:12px;color:#1a1a1a;letter-spacing:0.15px;">205,00</div>
<div class="a t s" style="right:76.29999999999995px;top:437.84px;font-size:12px;line-height:12px;color:#1a1a1a;letter-spacing:0.15px;">1 351,50</div>
<div class="a t s" style="left:112.4px;top:454.04px;font-size:12px;line-height:12px;color:#1a1a1a;letter-spacing:0.12px;-webkit-text-stroke:0.3px #1a1a1a;">Магазин на Маяковской</div>
<div class="a t s" style="right:262.79999999999995px;top:453.54px;font-size:12px;line-height:12px;color:#1a1a1a;letter-spacing:0.15px;">3,15</div>
<div class="a t s" style="right:172.79999999999995px;top:453.54px;font-size:12px;line-height:12px;color:#1a1a1a;letter-spacing:0.15px;">210,00</div>
<div class="a t s" style="right:76.29999999999995px;top:453.54px;font-size:12px;line-height:12px;color:#1a1a1a;letter-spacing:0.15px;">661,50</div>
<div class="a t s" style="left:112.4px;top:469.94px;font-size:12px;line-height:12px;color:#1a1a1a;letter-spacing:0.12px;-webkit-text-stroke:0.3px #1a1a1a;">Магазин на Покровке</div>
<div class="a t s" style="right:262.79999999999995px;top:469.44px;font-size:12px;line-height:12px;color:#1a1a1a;letter-spacing:0.15px;">3,45</div>
<div class="a t s" style="right:172.79999999999995px;top:469.44px;font-size:12px;line-height:12px;color:#1a1a1a;letter-spacing:0.15px;">200,00</div>
<div class="a t s" style="right:76.29999999999995px;top:469.44px;font-size:12px;line-height:12px;color:#1a1a1a;letter-spacing:0.15px;">690,00</div>
<div class="a t s" style="left:102.1px;top:485.84px;font-size:12px;line-height:12px;color:#1a1a1a;letter-spacing:0.12px;-webkit-text-stroke:0.3px #1a1a1a;">Картофель вес</div>
<div class="a t s" style="right:262.79999999999995px;top:485.34px;font-size:12px;line-height:12px;color:#1a1a1a;letter-spacing:0.15px;">32,99</div>
<div class="a t s" style="right:172.79999999999995px;top:485.34px;font-size:12px;line-height:12px;color:#1a1a1a;letter-spacing:0.15px;">75,00</div>
<div class="a t s" style="right:76.29999999999995px;top:485.34px;font-size:12px;line-height:12px;color:#1a1a1a;letter-spacing:0.15px;">2 474,25</div>
<div class="a t s" style="left:112.4px;top:501.74px;font-size:12px;line-height:12px;color:#1a1a1a;letter-spacing:0.12px;-webkit-text-stroke:0.3px #1a1a1a;">Магазин на Маяковской</div>
<div class="a t s" style="right:262.79999999999995px;top:501.24px;font-size:12px;line-height:12px;color:#1a1a1a;letter-spacing:0.15px;">11,39</div>
<div class="a t s" style="right:172.79999999999995px;top:501.24px;font-size:12px;line-height:12px;color:#1a1a1a;letter-spacing:0.15px;">75,00</div>
<div class="a t s" style="right:76.29999999999995px;top:501.24px;font-size:12px;line-height:12px;color:#1a1a1a;letter-spacing:0.15px;">854,25</div>
<div class="a t s" style="left:112.4px;top:517.64px;font-size:12px;line-height:12px;color:#1a1a1a;letter-spacing:0.12px;-webkit-text-stroke:0.3px #1a1a1a;">Магазин на Покровке</div>
<div class="a t s" style="right:262.79999999999995px;top:517.14px;font-size:12px;line-height:12px;color:#1a1a1a;letter-spacing:0.15px;">21,6</div>
<div class="a t s" style="right:172.79999999999995px;top:517.14px;font-size:12px;line-height:12px;color:#1a1a1a;letter-spacing:0.15px;">75,00</div>
<div class="a t s" style="right:76.29999999999995px;top:517.14px;font-size:12px;line-height:12px;color:#1a1a1a;letter-spacing:0.15px;">1 620,00</div>
<div class="a t s" style="left:102.1px;top:533.54px;font-size:12px;line-height:12px;color:#1a1a1a;letter-spacing:0.12px;-webkit-text-stroke:0.3px #1a1a1a;">Лук белый вес</div>
<div class="a t s" style="right:262.79999999999995px;top:533.04px;font-size:12px;line-height:12px;color:#1a1a1a;letter-spacing:0.15px;">14,27</div>
<div class="a t s" style="right:172.79999999999995px;top:533.04px;font-size:12px;line-height:12px;color:#1a1a1a;letter-spacing:0.15px;">62,50</div>
<div class="a t s" style="right:76.29999999999995px;top:533.04px;font-size:12px;line-height:12px;color:#1a1a1a;letter-spacing:0.15px;">889,70</div>
<div class="a t s" style="left:112.4px;top:549.44px;font-size:12px;line-height:12px;color:#1a1a1a;letter-spacing:0.12px;-webkit-text-stroke:0.3px #1a1a1a;">Магазин на Маяковской</div>
<div class="a t s" style="right:262.79999999999995px;top:548.94px;font-size:12px;line-height:12px;color:#1a1a1a;letter-spacing:0.15px;">6,7</div>
<div class="a t s" style="right:172.79999999999995px;top:548.94px;font-size:12px;line-height:12px;color:#1a1a1a;letter-spacing:0.15px;">65,00</div>
<div class="a t s" style="right:76.29999999999995px;top:548.94px;font-size:12px;line-height:12px;color:#1a1a1a;letter-spacing:0.15px;">435,50</div>
<div class="a t s" style="left:112.4px;top:565.24px;font-size:12px;line-height:12px;color:#1a1a1a;letter-spacing:0.12px;-webkit-text-stroke:0.3px #1a1a1a;">Магазин на Покровке</div>
<div class="a t s" style="right:262.79999999999995px;top:564.74px;font-size:12px;line-height:12px;color:#1a1a1a;letter-spacing:0.15px;">7,57</div>
<div class="a t s" style="right:172.79999999999995px;top:564.74px;font-size:12px;line-height:12px;color:#1a1a1a;letter-spacing:0.15px;">60,00</div>
<div class="a t s" style="right:76.29999999999995px;top:564.74px;font-size:12px;line-height:12px;color:#1a1a1a;letter-spacing:0.15px;">454,20</div>
<div class="a t s" style="left:102.1px;top:580.94px;font-size:12px;line-height:12px;color:#1a1a1a;letter-spacing:0.12px;-webkit-text-stroke:0.3px #1a1a1a;">Морковь вес</div>
<div class="a t s" style="right:262.79999999999995px;top:580.44px;font-size:12px;line-height:12px;color:#1a1a1a;letter-spacing:0.15px;">30,5</div>
<div class="a t s" style="right:172.79999999999995px;top:580.44px;font-size:12px;line-height:12px;color:#1a1a1a;letter-spacing:0.15px;">37,00</div>
<div class="a t s" style="right:76.29999999999995px;top:580.44px;font-size:12px;line-height:12px;color:#1a1a1a;letter-spacing:0.15px;">1 128,50</div>
<div class="a t s" style="left:112.4px;top:596.54px;font-size:12px;line-height:12px;color:#1a1a1a;letter-spacing:0.12px;-webkit-text-stroke:0.3px #1a1a1a;">Магазин на Маяковской</div>
<div class="a t s" style="right:262.79999999999995px;top:596.04px;font-size:12px;line-height:12px;color:#1a1a1a;letter-spacing:0.15px;">18,15</div>
<div class="a t s" style="right:172.79999999999995px;top:596.04px;font-size:12px;line-height:12px;color:#1a1a1a;letter-spacing:0.15px;">37,00</div>
<div class="a t s" style="right:76.29999999999995px;top:596.04px;font-size:12px;line-height:12px;color:#1a1a1a;letter-spacing:0.15px;">671,55</div>
<div class="a t s" style="left:112.4px;top:612.54px;font-size:12px;line-height:12px;color:#1a1a1a;letter-spacing:0.12px;-webkit-text-stroke:0.3px #1a1a1a;">Магазин на Покровке</div>
<div class="a t s" style="right:262.79999999999995px;top:612.04px;font-size:12px;line-height:12px;color:#1a1a1a;letter-spacing:0.15px;">12,35</div>
<div class="a t s" style="right:172.79999999999995px;top:612.04px;font-size:12px;line-height:12px;color:#1a1a1a;letter-spacing:0.15px;">37,00</div>
<div class="a t s" style="right:76.29999999999995px;top:612.04px;font-size:12px;line-height:12px;color:#1a1a1a;letter-spacing:0.15px;">456,95</div>
<div class="a t" style="left:91.5px;top:627.76px;font-size:15.4px;line-height:15.4px;color:#1a1a1a;letter-spacing:-0.5px;">Итого</div>
<div class="a t" style="right:263.5px;top:627.93px;font-size:15.2px;line-height:15.2px;color:#1a1a1a;letter-spacing:-0.35px;">84,36</div>
<div class="a t" style="right:173px;top:627.93px;font-size:15.2px;line-height:15.2px;color:#1a1a1a;letter-spacing:-0.35px;">69,13</div>
<div class="a t" style="right:77px;top:627.93px;font-size:15.2px;line-height:15.2px;color:#1a1a1a;letter-spacing:-0.35px;">5 843,95</div>
<div class="a" style="left:0px;top:305px;width:9px;height:2px;background:#4a4a4a;"></div>
<div class="a" style="left:11px;top:298px;width:1.5px;height:11px;background:#8f8f8f;"></div>
<div class="a" style="left:1px;top:313px;width:2px;height:33px;background:#8f8f8f;"></div>
<div class="a" style="left:1px;top:344px;width:7px;height:2px;background:#8f8f8f;"></div>
<div class="a" style="left:17px;top:319.5px;width:2px;height:2px;background:#777;"></div>
<div class="a" style="left:17px;top:337.5px;width:2px;height:2px;background:#777;"></div>
<div class="a" style="left:-3.2px;top:402px;width:15.8px;height:15.8px;background:#8f8f8f;"></div>
<div class="a" style="left:-1.9000000000000001px;top:403.3px;width:13.2px;height:13.2px;background:#eeeeee;"></div>
<div class="a" style="left:0.3999999999999999px;top:410.2px;width:8.7px;height:1.8px;background:#3a3a3a;"></div>
<div class="a" style="left:1px;top:418px;width:2px;height:207px;background:#8f8f8f;"></div>
<div class="a" style="left:1px;top:623px;width:7px;height:2px;background:#8f8f8f;"></div>
<div class="a" style="left:12.4px;top:419px;width:15.8px;height:15.8px;background:#8f8f8f;"></div>
<div class="a" style="left:13.700000000000001px;top:420.3px;width:13.2px;height:13.2px;background:#eeeeee;"></div>
<div class="a" style="left:16.0px;top:427.2px;width:8.7px;height:1.8px;background:#3a3a3a;"></div>
<div class="a" style="left:17px;top:435px;width:2px;height:190px;background:#8f8f8f;"></div>
<div class="a" style="left:17px;top:623px;width:7px;height:2px;background:#8f8f8f;"></div>
<div class="a" style="left:28.2px;top:435px;width:15.8px;height:15.8px;background:#8f8f8f;"></div>
<div class="a" style="left:29.5px;top:436.3px;width:13.2px;height:13.2px;background:#eeeeee;"></div>
<div class="a" style="left:31.8px;top:443.2px;width:8.7px;height:1.8px;background:#3a3a3a;"></div>
<div class="a" style="left:28.2px;top:482px;width:15.8px;height:15.8px;background:#8f8f8f;"></div>
<div class="a" style="left:29.5px;top:483.3px;width:13.2px;height:13.2px;background:#eeeeee;"></div>
<div class="a" style="left:31.8px;top:490.2px;width:8.7px;height:1.8px;background:#3a3a3a;"></div>
<div class="a" style="left:28.2px;top:530px;width:15.8px;height:15.8px;background:#8f8f8f;"></div>
<div class="a" style="left:29.5px;top:531.3px;width:13.2px;height:13.2px;background:#eeeeee;"></div>
<div class="a" style="left:31.8px;top:538.2px;width:8.7px;height:1.8px;background:#3a3a3a;"></div>
<div class="a" style="left:28.2px;top:577px;width:15.8px;height:15.8px;background:#8f8f8f;"></div>
<div class="a" style="left:29.5px;top:578.3px;width:13.2px;height:13.2px;background:#eeeeee;"></div>
<div class="a" style="left:31.8px;top:585.2px;width:8.7px;height:1.8px;background:#3a3a3a;"></div>
<div class="a" style="left:33px;top:451px;width:2px;height:31px;background:#8f8f8f;"></div>
<div class="a" style="left:33px;top:480px;width:7px;height:2px;background:#8f8f8f;"></div>
<div class="a" style="left:33px;top:498px;width:2px;height:32px;background:#8f8f8f;"></div>
<div class="a" style="left:33px;top:528px;width:7px;height:2px;background:#8f8f8f;"></div>
<div class="a" style="left:33px;top:546px;width:2px;height:31px;background:#8f8f8f;"></div>
<div class="a" style="left:33px;top:575px;width:7px;height:2px;background:#8f8f8f;"></div>
<div class="a" style="left:33px;top:593px;width:2px;height:32px;background:#8f8f8f;"></div>
<div class="a" style="left:33px;top:623px;width:7px;height:2px;background:#8f8f8f;"></div>
<div class="a" style="left:49px;top:458.0px;width:2px;height:2px;background:#777;"></div>
<div class="a" style="left:49px;top:473.5px;width:2px;height:2px;background:#777;"></div>
<div class="a" style="left:49px;top:505.0px;width:2px;height:2px;background:#777;"></div>
<div class="a" style="left:49px;top:521.0px;width:2px;height:2px;background:#777;"></div>
<div class="a" style="left:49px;top:553.0px;width:2px;height:2px;background:#777;"></div>
<div class="a" style="left:49px;top:569.0px;width:2px;height:2px;background:#777;"></div>
<div class="a" style="left:49px;top:600.0px;width:2px;height:2px;background:#777;"></div>
<div class="a" style="left:49px;top:616.0px;width:2px;height:2px;background:#777;"></div>
</body></html>
